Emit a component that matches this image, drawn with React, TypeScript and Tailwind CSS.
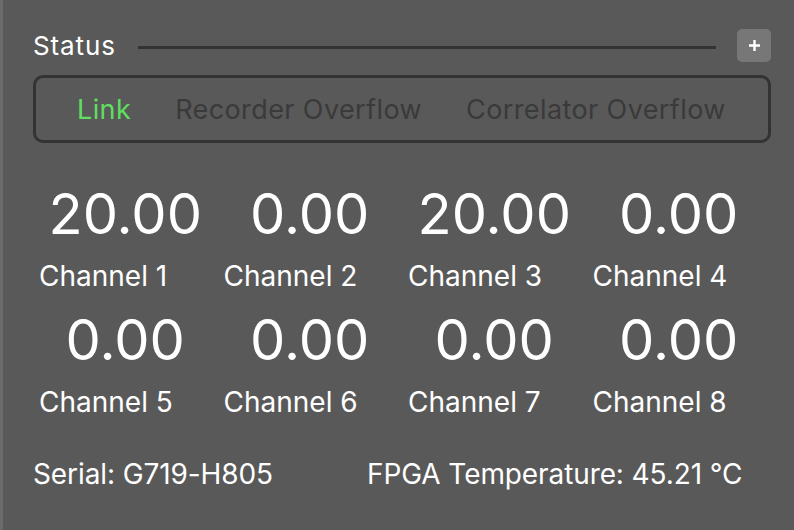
import React from 'react';

type Channel = { label: string; value: number };

const channels: Channel[] = [
  { label: 'Channel 1', value: 20 },
  { label: 'Channel 2', value: 0 },
  { label: 'Channel 3', value: 20 },
  { label: 'Channel 4', value: 0 },
  { label: 'Channel 5', value: 0 },
  { label: 'Channel 6', value: 0 },
  { label: 'Channel 7', value: 0 },
  { label: 'Channel 8', value: 0 },
];

const tabs = [
  { name: 'Link', active: true },
  { name: 'Recorder Overflow', active: false },
  { name: 'Correlator Overflow', active: false },
];

const App: React.FC = () => {
  return (
    <div className="w-[794px] h-[530px] bg-[#595959] border-l-[3px] border-[#6b6b6b] pl-[30px] pr-[23px] pt-[29px] font-['Inter','Noto_Sans',sans-serif] text-white overflow-hidden">
      {/* header */}
      <div className="flex items-center h-[33px]">
        <span className="text-[26px] leading-none tracking-[0.9px]">Status</span>
        <div className="flex-1 h-[3px] bg-[#333333] ml-[22px] mr-[21px] mt-[3px]" />
        <button className="w-[34px] h-[33px] rounded-[5px] bg-[#777777] flex items-center justify-center">
          <svg width="13" height="13" viewBox="0 0 13 13">
            <path d="M6.5 1v11M1 6.5h11" stroke="white" strokeWidth="2.4" />
          </svg>
        </button>
      </div>

      {/* indicator tabs */}
      <div className="mt-[13px] h-[68px] border-[3px] border-[#333333] rounded-[10px] flex items-center pl-[19px]">
        {tabs.map((t) => (
          <span
            key={t.name}
            className={`px-[22px] text-[27px] leading-none tracking-[0.4px] ${
              t.active ? 'text-[#5fdf5f]' : 'text-[#3a3a3a]'
            }`}
          >
            {t.name}
          </span>
        ))}
      </div>

      {/* channel readouts */}
      <div className="grid grid-cols-4 mt-[43px] gap-y-[22px]">
        {channels.map((c) => (
          <div key={c.label} className="flex flex-col">
            <span className="text-[56px] leading-none text-center">{c.value.toFixed(2)}</span>
            <span className="mt-[20px] pl-[6px] text-[28px] leading-none">{c.label}</span>
          </div>
        ))}
      </div>

      {/* footer */}
      <div className="flex mt-[44px] text-[28px] leading-none tracking-[-0.1px]">
        <span className="w-[334px]">Serial: G719-H805</span>
        <span>FPGA Temperature: 45.21 °C</span>
      </div>
    </div>
  );
};

export default App;
